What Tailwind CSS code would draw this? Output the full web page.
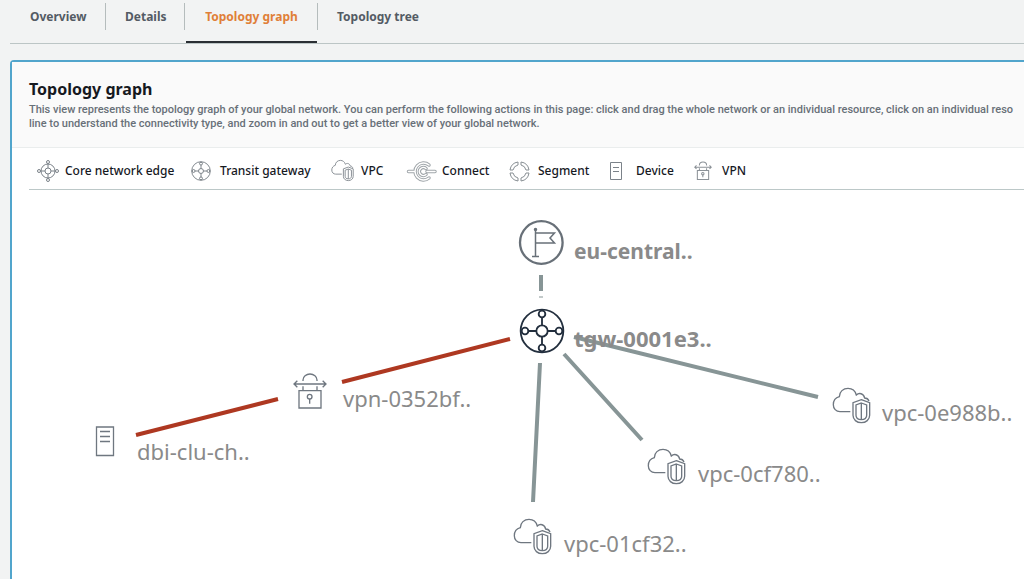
<!DOCTYPE html>
<html lang="en">
<head>
<meta charset="utf-8">
<title>Topology graph</title>
<script src="https://cdn.jsdelivr.net/npm/@tailwindcss/browser@4"></script>
</head>
<body class="min-h-screen overflow-hidden bg-[#f2f3f3] pl-2.5 font-['Noto_Sans',sans-serif] text-[#16191f]">
<svg class="hidden">
  <symbol id="vpc" viewBox="0 0 117 117">
    <g fill="none" stroke="currentColor">
      <path d="M55 77H24C12 77 4 68 4 56C4 44 11 35 22 32C22 17 34 7 48 7C60 7 70 15 73 27C81 19 95 22 98 36C104 36 109 40 111 45"/>
      <path d="M88 41L113 50V88C113 101 102 110 88 110C74 110 63 101 63 88V50Z"/>
      <path d="M88 51L104 57V88C104 96 98 101 88 101C78 101 72 96 72 88V57ZM88 51V101"/>
    </g>
  </symbol>
  <symbol id="vpn" viewBox="0 0 102 111">
    <g fill="none" stroke="currentColor">
      <path d="M18 56H84V108H18ZM30 27V24A21 18 0 0 1 72 24V27M30 43V56M72 43V56M4 36H98M13 26L3 36L13 46M89 26L99 36L89 46"/>
      <circle cx="50" cy="74" r="7"/><path d="M50 81V95"/>
    </g>
  </symbol>
  <symbol id="gateway" viewBox="0 0 138 138">
    <g fill="none" stroke="currentColor">
      <circle cx="69" cy="69" r="64"/><circle cx="69" cy="69" r="17"/>
      <circle cx="69" cy="18" r="10"/><circle cx="69" cy="120" r="10"/><circle cx="18" cy="69" r="10"/><circle cx="120" cy="69" r="10"/>
      <path d="M69 28V52M69 86V110M28 69H52M86 69H110"/>
    </g>
  </symbol>
</svg>

<nav aria-label="Global network" class="flex h-11 items-start border-b border-[#bcc5c5] pt-[3px] text-xs font-bold text-[#545b64]">
  <a href="#overview" class="flex h-[27px] w-24 items-center border-r border-[#b5bcbc] pl-5">Overview</a>
  <a href="#details" class="flex h-[27px] w-[79px] items-center border-r border-[#b5bcbc] pl-[19px]">Details</a>
  <div class="h-10 w-[132px] pl-px">
    <a href="#graph" aria-current="page" class="flex h-10 items-start justify-center border-b-2 border-[#2a2e33] leading-[27px] text-[#e07f38]">Topology graph</a>
  </div>
  <a href="#tree" class="flex h-[27px] items-center border-l border-[#b5bcbc] pl-[19px]">Topology tree</a>
</nav>

<main class="mt-4 min-h-[519px] rounded-tl-sm border-t-2 border-l-2 border-[#51a5cc] bg-white">
  <header class="h-[86px] overflow-hidden border-b border-[#eaeded] bg-[#fafafa] pt-[15px] pl-[17px]">
    <h1 class="text-base leading-6 font-bold">Topology graph</h1>
    <p class="pt-0.5 font-[Roboto,sans-serif] text-[11px] leading-[14px] font-medium whitespace-nowrap text-[#687078]">This view represents the topology graph of your global network. You can perform the following actions in this page: click and drag the whole network or an individual resource, click on an individual reso<br>line to understand the connectivity type, and zoom in and out to get a better view of your global network.</p>
  </header>

  <ul class="ml-[17px] grid h-[42px] grid-cols-[155px_141px_81px_96px_98px_86px_auto] items-center border-b border-[#bcc8c8] pt-1 text-xs font-medium whitespace-nowrap">
    <li class="flex items-center"><svg class="h-7 w-9 shrink-0" fill="none" stroke="#7b8289"><circle cx="19" cy="14" r="7"/><circle cx="19" cy="14" r="3"/><circle cx="19" cy="5" r="1.5"/><circle cx="19" cy="23" r="1.5"/><circle cx="10" cy="14" r="1.5"/><circle cx="28" cy="14" r="1.5"/><path d="M19 6.5V11M19 17V21.5M11.500 14H16M22 14H26.500"/></svg>Core network edge</li>
    <li class="flex items-center"><svg class="h-7 w-9 shrink-0 text-[#6c747b]"><use href="#gateway" x="7" y="4" width="20" height="20" stroke-width="6"/></svg>Transit gateway</li>
    <li class="flex items-center"><svg class="h-7 w-9 shrink-0 text-[#8b9197]"><use href="#vpc" x="6" y="2" width="23" height="23" stroke-width="5"/></svg>VPC</li>
    <li class="flex items-center"><svg class="h-7 w-9 shrink-0" fill="none" stroke-linecap="round"><g stroke="#a0a6aa" stroke-width="3.500"><path d="M2.500 14.500H8M23 8A8.500 8.500 0 1 0 23 21"/><path d="M29 14.500H21M20 11.500A4 4 0 1 0 20 17.500"/></g><g stroke="white" stroke-width="1.500"><path d="M2.500 14.500H8M23 8A8.500 8.500 0 1 0 23 21"/><path d="M29 14.500H21M20 11.500A4 4 0 1 0 20 17.500"/></g></svg>Connect</li>
    <li class="flex items-center"><svg class="h-7 w-9 shrink-0" fill="none" stroke="#888f94"><g id="seg"><path d="M19 5A9.500 9.500 0 0 1 27 13H24A6.500 6.500 0 0 0 19 8Z"/></g><use href="#seg" transform="rotate(90 17.500 14.500)"/><use href="#seg" transform="rotate(180 17.500 14.500)"/><use href="#seg" transform="rotate(270 17.500 14.500)"/></svg>Segment</li>
    <li class="flex items-center"><svg class="h-7 w-9 shrink-0" fill="none" stroke="#7b8289"><path d="M10.500 5.500H21.500V22.500H10.500ZM13 10.500H19M13 14.500H19"/></svg>Device</li>
    <li class="flex items-center"><svg class="h-7 w-9 shrink-0 text-[#8b9197]"><use href="#vpn" x="8" y="4" width="18" height="19" stroke-width="6"/></svg>VPN</li>
  </ul>

  <svg class="block h-[389px] w-full" role="img" aria-label="Network topology">
    <g transform="translate(0 -1)">
    <svg x="-12" y="-189" width="1100" height="600" overflow="visible">
      <g stroke-width="4" stroke="#879596">
        <path d="M541 275V291M541 296.500V297.500M574 337L818 397M564 354L642 440M540 363L533 502"/>
        <path d="M136 435L278 399M342 382L510 339" stroke="#ae3821"/>
      </g>
      <circle cx="541.300" cy="242.500" r="21.300" fill="white" stroke="#687078" stroke-width="2.300"/>
      <g fill="none" stroke="#687078" stroke-width="1.500"><path d="M535.500 231V256.500M532 256.500H539M535.500 233H554.500L550 238L554.500 243H535.500"/><circle cx="535.500" cy="229.500" r="1" fill="#687078"/></g>
      <use href="#gateway" x="519" y="308" width="46" height="46" stroke-width="5.500" class="text-[#232f3e]"/>
      <g class="text-[#6f7780]" stroke-width="4">
        <use href="#vpn" x="293" y="372" width="34" height="37"/>
        <path fill="none" stroke="currentColor" stroke-width="1.300" d="M96.500 427H113.500V455.500H96.500ZM100 431.500H110M100 436.500H110M100 441.500H110"/>
        <use href="#vpc" x="647" y="447" width="39" height="39"/>
        <use href="#vpc" x="513" y="517" width="39" height="39"/>
        <use href="#vpc" x="832" y="386" width="39" height="39"/>
      </g>
      <g class="fill-[#8a8a8a] text-[22px]">
        <text x="574" y="259" class="text-[21px] font-bold">eu-central..</text>
        <text x="574" y="347" class="font-bold">tgw-0001e3..</text>
        <text x="343" y="407">vpn-0352bf..</text>
        <text x="137" y="460">dbi-clu-ch..</text>
        <text x="882" y="421">vpc-0e988b..</text>
        <text x="698" y="482">vpc-0cf780..</text>
        <text x="564" y="552">vpc-01cf32..</text>
      </g>
    </svg>
    </g>
  </svg>
</main>
</body>
</html>
